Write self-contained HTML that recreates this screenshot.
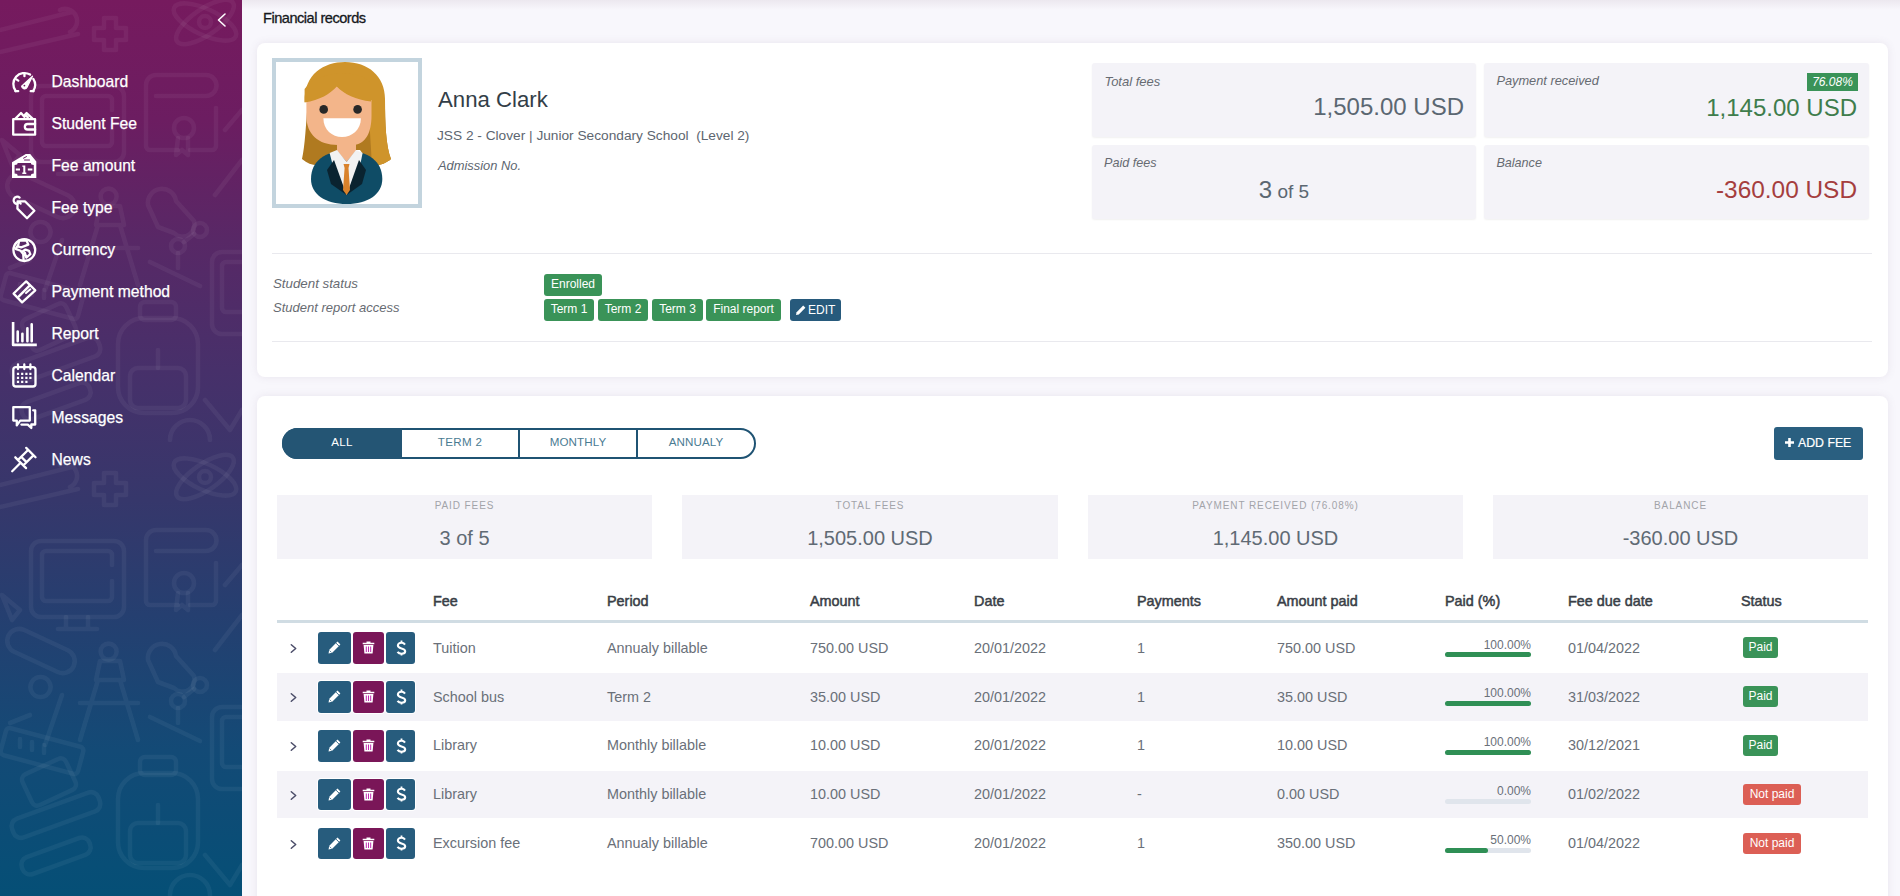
<!DOCTYPE html><html><head><meta charset="utf-8"><style>
html,body{margin:0;padding:0;width:1900px;height:896px;overflow:hidden;}
body{background:#f8f7fc;font-family:"Liberation Sans", sans-serif;position:relative;}
.t{position:absolute;white-space:nowrap;line-height:1;}
.r{position:absolute;box-sizing:border-box;}
.ic{position:absolute;}
</style></head><body>
<div class="r" style="left:0;top:0;width:242px;height:896px;background:linear-gradient(180deg,#761a5e 0px,#6c1d61 120px,#582866 240px,#47306a 370px,#36376b 500px,#253f70 615px,#134a76 750px,#054f76 896px);overflow:hidden;">
<svg width="242" height="896" style="position:absolute;left:0;top:0" fill="none" stroke="rgba(255,255,255,0.05)" stroke-width="4.6" stroke-linecap="round" stroke-linejoin="round">
<defs><g id="tile">
<path d="M104 18 h12 v10 h10 v12 h-10 v10 h-12 v-10 h-10 v-12 h10 z"/>
<ellipse cx="205" cy="22" rx="34" ry="13" transform="rotate(25 205 22)"/><ellipse cx="205" cy="22" rx="34" ry="13" transform="rotate(-35 205 22)"/><circle cx="205" cy="22" r="6"/>
<path d="M0 30 L72 12 M0 52 L78 34 M60 10 a10 10 0 0 1 10 22"/>
<rect x="31" y="86" width="93" height="76" rx="10"/><path d="M112 110 V100 a4 4 0 0 0 -4 -4 H46 a4 4 0 0 0 -4 4 V142 a4 4 0 0 0 4 4 H108 a4 4 0 0 0 4 -4 V126"/><path d="M66 162 v12 M88 162 v12 M58 174 H97"/>
<path d="M156 96 H206 a10 10 0 0 0 0 -21 H156 a10 10 0 0 0 -10 10 V146 a4 4 0 0 0 4 4 H178 M190 150 H212 a4 4 0 0 0 4 -4 V108"/><circle cx="184" cy="128" r="10"/><path d="M178 138 L176 155 L182 150 L188 155 L188 138"/>
<path d="M2 140 L20 155 L12 165 Z"/>
<path d="M225 130 L242 110 M215 195 L242 160"/>
<rect x="5" y="184" width="72" height="24" rx="12" transform="rotate(25 41 196)"/>
<circle cx="108.6" cy="196.6" r="8"/><path d="M100 206 L120 206 L124 225 L96 225 Z M98 225 L80 285 M120 225 L138 285 M80 248 H138"/>
<path d="M148 205 a14 14 0 0 1 28 -4 l18 20 a12 12 0 0 1 -20 12 l-16 -6 z"/>
<circle cx="200" cy="230" r="7"/><circle cx="178" cy="246" r="7"/><path d="M194 234 L184 242 M178 253 V268 M150 262 L200 286"/>
<rect x="212" y="252" width="50" height="82" rx="10"/><rect x="222" y="262" width="30" height="50" rx="4"/>
<path d="M40 242 a10 10 0 1 1 1 0 M30 260 L10 268 M62 240 L45 290"/>
<rect x="2" y="282" width="80" height="28" rx="4" transform="rotate(15 42 296)"/><path d="M20 284 v8 M32 287 v8 M44 290 v8"/>
<rect x="25" y="310" width="48" height="34" rx="6" transform="rotate(-25 49 327)"/>
<rect x="118" y="318" width="80" height="95" rx="26"/><rect x="140" y="302" width="36" height="18" rx="5"/><rect x="130" y="368" width="56" height="40" rx="8"/><path d="M158 350 v18"/>
<rect x="10" y="350" width="92" height="20" rx="8" transform="rotate(-20 56 360)"/>
<rect x="20" y="392" width="72" height="18" rx="8" transform="rotate(-20 56 401)"/>
<path d="M205 400 L230 430 L242 410"/>
<path d="M170 440 a20 20 0 0 1 40 0"/>
</g></defs>
<use href="#tile" y="-455"/><use href="#tile" y="0"/><use href="#tile" y="455"/>
</svg>
</div>
<svg class="ic" style="left:214px;top:11px" width="14" height="18" viewBox="0 0 14 18"><path d="M11 3 L4.5 9 L11 15" stroke="#fff" stroke-width="1.6" fill="none" stroke-linecap="round" stroke-linejoin="round"/></svg>
<div class="t" style="left:51.5px;top:73.91px;font-size:15.7px;color:#ffffff;-webkit-text-stroke:0.25px #fff;">Dashboard</div>
<div class="t" style="left:51.5px;top:115.91px;font-size:15.7px;color:#ffffff;-webkit-text-stroke:0.25px #fff;">Student Fee</div>
<div class="t" style="left:51.5px;top:157.91px;font-size:15.7px;color:#ffffff;-webkit-text-stroke:0.25px #fff;">Fee amount</div>
<div class="t" style="left:51.5px;top:199.91px;font-size:15.7px;color:#ffffff;-webkit-text-stroke:0.25px #fff;">Fee type</div>
<div class="t" style="left:51.5px;top:241.91px;font-size:15.7px;color:#ffffff;-webkit-text-stroke:0.25px #fff;">Currency</div>
<div class="t" style="left:51.5px;top:283.91px;font-size:15.7px;color:#ffffff;-webkit-text-stroke:0.25px #fff;">Payment method</div>
<div class="t" style="left:51.5px;top:325.91px;font-size:15.7px;color:#ffffff;-webkit-text-stroke:0.25px #fff;">Report</div>
<div class="t" style="left:51.5px;top:367.91px;font-size:15.7px;color:#ffffff;-webkit-text-stroke:0.25px #fff;">Calendar</div>
<div class="t" style="left:51.5px;top:409.91px;font-size:15.7px;color:#ffffff;-webkit-text-stroke:0.25px #fff;">Messages</div>
<div class="t" style="left:51.5px;top:451.91px;font-size:15.7px;color:#ffffff;-webkit-text-stroke:0.25px #fff;">News</div>
<svg class="ic" style="left:8px;top:66px" width="34" height="34" viewBox="0 0 34 34" fill="none" stroke="#fff" stroke-width="2.3" stroke-linecap="round" stroke-linejoin="round"><path d="M7.7 25 A11.1 11.1 0 0 1 22.1 8.6"/><path d="M25.3 12.9 A11.1 11.1 0 0 1 25.2 25"/><path d="M7.4 25.2 H10.2 M25.5 25.2 H22.7 M16.45 7.2 V10.2 M8.4 13.4 L10.3 14.6"/><path d="M13.6 20.3 L24.5 10.2 L19.1 21.3 A2.9 2.9 0 0 1 13.6 20.3 Z" fill="#fff" stroke-width="1.2"/><circle cx="16.4" cy="19.6" r="0.9" fill="#6e1c60" stroke="none"/></svg>
<svg class="ic" style="left:8px;top:108px" width="34" height="34" viewBox="0 0 34 34" fill="none" stroke="#fff" stroke-width="2.3" stroke-linecap="round" stroke-linejoin="round"><rect x="5.2" y="11.2" width="21.9" height="15.5"/><path d="M27.1 16 H19.6 a2.75 2.75 0 0 0 0 5.5 H27.1"/><path d="M7.5 10.5 L13 5 L16.5 9 M15.8 8 L18.6 5 L24.5 10.5 M18.2 7.8 l1.6 1.6"/></svg>
<svg class="ic" style="left:8px;top:150px" width="34" height="34" viewBox="0 0 34 34" fill="none" stroke="#fff" stroke-width="2.3" stroke-linecap="round" stroke-linejoin="round"><path fill="#fff" stroke="none" fill-rule="evenodd" d="M4 12.2 L17.8 4 H22.2 L28.3 11.6 V27.9 H4 Z M9.7 13 H22.8 L23.4 14.6 L25.8 15.1 V23.4 L23.4 23.9 L22.8 25.8 H9.7 L9.1 23.9 L6.6 23.4 V15.1 L9.1 14.6 Z"/><path stroke="#6a1e62" stroke-width="1" d="M15.5 8.2 l3 -1.6 M16.5 10 h5"/><path fill="#fff" stroke="none" d="M7.8 18.6 h4.2 v1.9 h-4.2 z M19.8 18.6 h4.6 v1.9 h-4.6 z M14.3 15.4 H17.3 V22.6 H18.3 V24 H14.3 V22.6 H15.3 V16.8 H14.3 Z"/></svg>
<svg class="ic" style="left:8px;top:191px" width="34" height="34" viewBox="0 0 34 34" fill="none" stroke="#fff" stroke-width="2.3" stroke-linecap="round" stroke-linejoin="round"><path d="M9.6 10.3 H16.9 L26.4 19.8 L19 27.2 L9.4 17.6 Z"/><path d="M11.6 6.6 A3.6 3.6 0 1 0 9.4 12.9 M12.6 12.6 a1.6 1.6 0 0 0 -2.4 -0.8"/></svg>
<svg class="ic" style="left:8px;top:233px" width="34" height="34" viewBox="0 0 34 34" fill="none" stroke="#fff" stroke-width="2.3" stroke-linecap="round" stroke-linejoin="round"><circle cx="16.3" cy="17.1" r="10.9"/><path d="M11.2 7.5 L10.2 12 L7.6 15.8 L12.6 17.7 L15.2 21 L15.6 27 M11.2 7.5 H18.5 L20.3 11.7 L13.2 14.3 L10.5 13.6 M14.8 18.2 L17.4 16.6 L21.0 17.8 L22.3 21.2 L18.3 24.6 L16.8 19.6"/></svg>
<svg class="ic" style="left:8px;top:275px" width="34" height="34" viewBox="0 0 34 34" fill="none" stroke="#fff" stroke-width="2.3" stroke-linecap="round" stroke-linejoin="round"><path d="M5.6 18.6 L18.2 6.4 L27.3 15.3 L14.1 27.4 Z"/><path d="M10.6 21.6 L21.6 10.6" stroke-width="2.4"/><path d="M18.0 18.0 L22.3 14.3" stroke-width="2"/><path d="M8.0 18.6 L17.6 8.9" stroke-width="0.9" stroke="#552763" /></svg>
<svg class="ic" style="left:8px;top:316px" width="34" height="34" viewBox="0 0 34 34" fill="none" stroke="#fff" stroke-width="2.3" stroke-linecap="round" stroke-linejoin="round"><path d="M5.1 5.9 V28.9 H28.8" stroke-width="2.6" stroke-linecap="butt"/><path d="M9.7 15.6 V25.3 M14.4 17.7 V25.3 M19.4 12.2 V25.3 M23.7 8.4 V25.3" stroke-width="2.6"/></svg>
<svg class="ic" style="left:8px;top:358px" width="34" height="34" viewBox="0 0 34 34" fill="none" stroke="#fff" stroke-width="2.3" stroke-linecap="round" stroke-linejoin="round"><rect x="5.3" y="9.1" width="22.2" height="19.4" rx="2.6"/><path d="M10 6.4 V11 M16.3 6.4 V11 M22.4 6.4 V11"/><path fill="#fff" stroke="none" d="M8.9 14.8h2.2v2.2h-2.2zM13.1 14.8h2.2v2.2h-2.2zM17.3 14.8h2.2v2.2h-2.2zM21.3 14.8h2.2v2.2h-2.2zM8.9 18.8h2.2v2.2h-2.2zM13.1 18.8h2.2v2.2h-2.2zM17.3 18.8h2.2v2.2h-2.2zM21.3 18.8h2.2v2.2h-2.2zM8.9 22.8h2.2v2.2h-2.2zM13.1 22.8h2.2v2.2h-2.2zM17.3 22.8h2.2v2.2h-2.2z"/></svg>
<svg class="ic" style="left:8px;top:400px" width="34" height="34" viewBox="0 0 34 34" fill="none" stroke="#fff" stroke-width="2.3" stroke-linecap="round" stroke-linejoin="round"><path d="M5.3 7.2 H21.8 V20.6 H12.2 L8.8 25.4 V20.6 H5.3 Z"/><path d="M25.2 10.3 H27.2 V24.5 H23.3 V28.0 L19.8 24.6 H13.4"/></svg>
<svg class="ic" style="left:8px;top:442px" width="34" height="34" viewBox="0 0 34 34" fill="none" stroke="#fff" stroke-width="2.3" stroke-linecap="round" stroke-linejoin="round"><g transform="translate(4.2 29.2) rotate(45)"><path d="M0 0 V-10.5 M-7.6 -12 H7.6 M-3.8 -12.5 L-3.8 -25.5 M3.8 -12.5 L3.8 -25.5 M-6.6 -26.4 H6.6 M-3.4 -16.5 H3.4" /></g></svg>
<div class="r" style="left:242px;top:0px;width:1658px;height:10px;background:linear-gradient(180deg,#ece8ef,#f8f7fc);"></div>
<div class="t" style="left:263.0px;top:11.44px;font-size:14.6px;color:#16191d;letter-spacing:-0.5px;-webkit-text-stroke:0.3px #16191d;">Financial records</div>
<div class="r" style="left:257px;top:43px;width:1631px;height:334px;background:#fff;border-radius:8px;box-shadow:0 0 9px rgba(125,95,135,0.12);"></div>
<div class="r" style="left:272px;top:58px;width:150px;height:150px;border:4px solid #c3d4de;background:#fff;"></div>
<svg class="ic" style="left:268px;top:54px" width="160" height="160" viewBox="0 0 160 160">
<path d="M40 45 C38 70 37 92 34 105 C40 110 46 112 52 111 L70 96 L92 96 L104 112 C112 112 120 108 123 105 C118 92 117 70 117 45 Z" fill="#b07a20"/>
<path d="M100 45 L104 112 C112 112 120 108 123 105 C118 92 117 70 117 45 Z" fill="#cf942b"/>
<path d="M36.6 48 C36 20 56 8 77 8 C100 8 117 22 117 45 L117 60 L103 60 L103 48 Z" fill="#cf942b"/>
<path d="M38.4 46 L38.4 62 C38.4 80 50 91 70 91 L84 91 C98 91 103.5 78 103.5 62 L103.5 46 C88 44 76 40 68.75 32 C60 40 50 44 38.4 46 Z" fill="#f3b58a"/>
<path d="M36.6 48.5 C52 46 62 40 68.75 32.5 C76 40 88 46 103 47.5 L103 30 C95 15 50 15 36.6 35 Z" fill="#cf942b"/>
<circle cx="55.7" cy="55.4" r="4.3" fill="#282828"/><circle cx="89.6" cy="55.4" r="4.3" fill="#282828"/>
<path d="M55.4 64.3 L92.9 64.3 C92.9 76 84 83 74 83 C64 83 55.4 76 55.4 64.3 Z" fill="#fff"/>
<path d="M69 88 L88 88 L88 100 L69 100 Z" fill="#f3b58a"/>
<path d="M43 125 C43 107 57 97 78.6 97 C100 97 114.3 107 114.3 125 C114.3 140 100 150 78.6 150 C57 150 43 140 43 125 Z" fill="#0f4c66"/>
<path d="M69 88 L88 88 L88 97 L78.6 108 L69 97 Z" fill="#f3b58a"/><path d="M61.6 99 L69 96 L78.6 108 L88 96 L94.6 99 L92 112 L78.6 141 L65 112 Z" fill="#f2f2f2"/>
<path d="M59 116 L66 106 L78.6 141 L63 130 Z" fill="#0a2330"/><path d="M98 116 L91 106 L78.6 141 L94 130 Z" fill="#0a2330"/>
<path d="M75.5 110 L81.5 110 L80.5 114 L82 136 L78.6 141 L75 136 L76.6 114 Z" fill="#d9822b"/>
</svg>
<div class="t" style="left:438.0px;top:89.21px;font-size:22.2px;color:#333e48;">Anna Clark</div>
<div class="t" style="left:437.0px;top:129.20px;font-size:13.7px;color:#5d6670;">JSS 2 - Clover | Junior Secondary School&nbsp; (Level 2)</div>
<div class="t" style="left:438.0px;top:159.88px;font-size:12.9px;color:#5d6670;font-style:italic;">Admission No.</div>
<div class="r" style="left:1092px;top:63px;width:384px;height:74px;background:#f4f3f8;border-radius:3px;box-shadow:0 1px 2px rgba(0,0,0,0.06);"></div>
<div class="r" style="left:1484px;top:63px;width:385px;height:74px;background:#f4f3f8;border-radius:3px;box-shadow:0 1px 2px rgba(0,0,0,0.06);"></div>
<div class="r" style="left:1092px;top:145px;width:384px;height:74px;background:#f4f3f8;border-radius:3px;box-shadow:0 1px 2px rgba(0,0,0,0.06);"></div>
<div class="r" style="left:1484px;top:145px;width:385px;height:74px;background:#f4f3f8;border-radius:3px;box-shadow:0 1px 2px rgba(0,0,0,0.06);"></div>
<div class="t" style="left:1104.4px;top:75.00px;font-size:13px;color:#676b72;font-style:italic;">Total fees</div>
<div class="t" style="left:864.0px;width:600px;text-align:right;top:95.48px;font-size:24px;color:#5b6772;">1,505.00 USD</div>
<div class="t" style="left:1496.4px;top:75.16px;font-size:12.8px;color:#676b72;font-style:italic;">Payment received</div>
<div class="r" style="left:1807px;top:73px;width:51px;height:18px;background:#3a9358;"></div>
<div class="t" style="left:1532.5px;width:600px;text-align:center;top:76.34px;font-size:12px;color:#fff;font-style:italic;">76.08%</div>
<div class="t" style="left:1257.0px;width:600px;text-align:right;top:95.88px;font-size:24px;color:#3f7d4c;">1,145.00 USD</div>
<div class="t" style="left:1104.0px;top:157.03px;font-size:12.6px;color:#676b72;font-style:italic;">Paid fees</div>
<div class="t" style="left:984px;width:600px;text-align:center;top:178.18px;font-size:24px;color:#5b6772;">3<span style="font-size:19px"> of 5</span></div>
<div class="t" style="left:1496.4px;top:157.03px;font-size:12.6px;color:#676b72;font-style:italic;">Balance</div>
<div class="t" style="left:1257.0px;width:600px;text-align:right;top:177.65px;font-size:24.4px;color:#a53e3e;">-360.00 USD</div>
<div class="r" style="left:272px;top:253px;width:1600px;height:1px;background:#e9e9ee;"></div>
<div class="t" style="left:273.0px;top:276.64px;font-size:13.3px;color:#676b72;font-style:italic;">Student status</div>
<div class="t" style="left:273.0px;top:301.40px;font-size:13px;color:#676b72;font-style:italic;">Student report access</div>
<div class="r" style="left:544px;top:274px;width:58px;height:22px;background:#3a9358;border-radius:3px;"></div>
<div class="t" style="left:273.0px;width:600px;text-align:center;top:278.04px;font-size:12px;color:#fff;">Enrolled</div>
<div class="r" style="left:544px;top:299px;width:50px;height:22px;background:#3a9358;border-radius:3px;"></div>
<div class="t" style="left:269.0px;width:600px;text-align:center;top:303.04px;font-size:12px;color:#fff;">Term 1</div>
<div class="r" style="left:598px;top:299px;width:50px;height:22px;background:#3a9358;border-radius:3px;"></div>
<div class="t" style="left:323.0px;width:600px;text-align:center;top:303.04px;font-size:12px;color:#fff;">Term 2</div>
<div class="r" style="left:652px;top:299px;width:51px;height:22px;background:#3a9358;border-radius:3px;"></div>
<div class="t" style="left:377.5px;width:600px;text-align:center;top:303.04px;font-size:12px;color:#fff;">Term 3</div>
<div class="r" style="left:706px;top:299px;width:75px;height:22px;background:#3a9358;border-radius:3px;"></div>
<div class="t" style="left:443.5px;width:600px;text-align:center;top:303.04px;font-size:12px;color:#fff;">Final report</div>
<div class="r" style="left:790px;top:299px;width:51px;height:22px;background:#275a7c;border-radius:3px;"></div>
<svg class="ic" style="left:795px;top:304px" width="12" height="12" viewBox="0 0 12 12"><path d="M1 11 L1.6 8.2 L8.2 1.6 L10.4 3.8 L3.8 10.4 Z" fill="#fff"/></svg>
<div class="t" style="left:808.0px;top:304.04px;font-size:12px;color:#fff;">EDIT</div>
<div class="r" style="left:272px;top:341px;width:1600px;height:1px;background:#e9e9ee;"></div>
<div class="r" style="left:257px;top:396px;width:1631px;height:534px;background:#fff;border-radius:8px;box-shadow:0 0 9px rgba(125,95,135,0.12);"></div>
<div class="r" style="left:282px;top:428px;width:474px;height:31px;border:2px solid #1f5373;border-radius:16px;overflow:hidden;"></div>
<div class="r" style="left:282px;top:428px;width:120px;height:31px;background:#245574;border-radius:16px 0 0 16px;"></div>
<div class="r" style="left:518px;top:428px;width:2px;height:31px;background:#1f5373;"></div>
<div class="r" style="left:636px;top:428px;width:2px;height:31px;background:#1f5373;"></div>
<div class="t" style="left:42.0px;width:600px;text-align:center;top:436.18px;font-size:11.6px;color:#fff;letter-spacing:0.3px;">ALL</div>
<div class="t" style="left:160.0px;width:600px;text-align:center;top:436.18px;font-size:11.6px;color:#4a7b92;letter-spacing:0.3px;">TERM 2</div>
<div class="t" style="left:278.0px;width:600px;text-align:center;top:436.18px;font-size:11.6px;color:#4a7b92;letter-spacing:0.1px;">MONTHLY</div>
<div class="t" style="left:396.0px;width:600px;text-align:center;top:436.18px;font-size:11.6px;color:#4a7b92;letter-spacing:0.1px;">ANNUALY</div>
<div class="r" style="left:1774px;top:427px;width:89px;height:33px;background:#2a5f80;border-radius:3px;"></div>
<svg class="ic" style="left:1784px;top:437px" width="11" height="11" viewBox="0 0 11 11"><path d="M5.5 1 V10 M1 5.5 H10" stroke="#fff" stroke-width="2.6"/></svg>
<div class="t" style="left:1798.0px;top:436.59px;font-size:12.3px;color:#fff;-webkit-text-stroke:0.2px #fff;">ADD FEE</div>
<div class="r" style="left:277px;top:495px;width:375px;height:64px;background:#f4f3f8;"></div>
<div class="t" style="left:164.5px;width:600px;text-align:center;top:500.54px;font-size:10px;color:#a2a3a9;letter-spacing:0.9px;">PAID FEES</div>
<div class="t" style="left:164.5px;width:600px;text-align:center;top:527.87px;font-size:20px;color:#606a74;">3 of 5</div>
<div class="r" style="left:682px;top:495px;width:376px;height:64px;background:#f4f3f8;"></div>
<div class="t" style="left:570.0px;width:600px;text-align:center;top:500.54px;font-size:10px;color:#a2a3a9;letter-spacing:0.9px;">TOTAL FEES</div>
<div class="t" style="left:570.0px;width:600px;text-align:center;top:527.87px;font-size:20px;color:#606a74;">1,505.00 USD</div>
<div class="r" style="left:1088px;top:495px;width:375px;height:64px;background:#f4f3f8;"></div>
<div class="t" style="left:975.5px;width:600px;text-align:center;top:500.54px;font-size:10px;color:#a2a3a9;letter-spacing:0.9px;">PAYMENT RECEIVED (76.08%)</div>
<div class="t" style="left:975.5px;width:600px;text-align:center;top:527.87px;font-size:20px;color:#606a74;">1,145.00 USD</div>
<div class="r" style="left:1493px;top:495px;width:375px;height:64px;background:#f4f3f8;"></div>
<div class="t" style="left:1380.5px;width:600px;text-align:center;top:500.54px;font-size:10px;color:#a2a3a9;letter-spacing:0.9px;">BALANCE</div>
<div class="t" style="left:1380.5px;width:600px;text-align:center;top:527.87px;font-size:20px;color:#606a74;">-360.00 USD</div>
<div class="t" style="left:433.0px;top:594.11px;font-size:14.4px;color:#393e46;-webkit-text-stroke:0.5px #393e46;">Fee</div>
<div class="t" style="left:607.0px;top:594.11px;font-size:14.4px;color:#393e46;-webkit-text-stroke:0.5px #393e46;">Period</div>
<div class="t" style="left:810.0px;top:594.11px;font-size:14.4px;color:#393e46;-webkit-text-stroke:0.5px #393e46;">Amount</div>
<div class="t" style="left:974.0px;top:594.11px;font-size:14.4px;color:#393e46;-webkit-text-stroke:0.5px #393e46;">Date</div>
<div class="t" style="left:1137.0px;top:594.11px;font-size:14.4px;color:#393e46;-webkit-text-stroke:0.5px #393e46;">Payments</div>
<div class="t" style="left:1277.0px;top:594.11px;font-size:14.4px;color:#393e46;-webkit-text-stroke:0.5px #393e46;">Amount paid</div>
<div class="t" style="left:1445.0px;top:594.11px;font-size:14.4px;color:#393e46;-webkit-text-stroke:0.5px #393e46;">Paid (%)</div>
<div class="t" style="left:1568.0px;top:594.11px;font-size:14.4px;color:#393e46;-webkit-text-stroke:0.5px #393e46;">Fee due date</div>
<div class="t" style="left:1741.0px;top:594.11px;font-size:14.4px;color:#393e46;-webkit-text-stroke:0.5px #393e46;">Status</div>
<div class="r" style="left:277px;top:620px;width:1591px;height:3px;background:#d0dce3;"></div>
<svg class="ic" style="left:288px;top:642.4px" width="12" height="14" viewBox="0 0 12 14"><path d="M3.3 2.7 L7.7 6.5 L3.3 10.3" stroke="#4a4c68" stroke-width="1.5" fill="none" stroke-linecap="round" stroke-linejoin="round"/></svg>
<div class="r" style="left:318px;top:632px;width:33px;height:32px;background:#275c7d;border-radius:3px;box-shadow:0 0 0 1px #fff;"></div>
<div class="r" style="left:353px;top:632px;width:31px;height:32px;background:#7a1658;border-radius:3px;box-shadow:0 0 0 1px #fff;"></div>
<div class="r" style="left:386px;top:632px;width:29px;height:32px;background:#275c7d;border-radius:3px;box-shadow:0 0 0 1px #fff;"></div>
<svg class="ic" style="left:327px;top:640.4px" width="15" height="15" viewBox="0 0 15 15"><path d="M1.5 13.5 L2.3 9.8 L10.5 1.6 L13.4 4.5 L5.2 12.7 Z" fill="#fff"/><path d="M9.0 3.1 L11.9 6.0" stroke="#275c7d" stroke-width="0.9"/><path d="M2.6 10.6 L4.4 12.4" stroke="#275c7d" stroke-width="0.7"/></svg>
<svg class="ic" style="left:362px;top:640.4px" width="13" height="14" viewBox="0 0 13 14"><path d="M4.5 1.5 h4 v1.2 h3.8 v1.6 H0.7 V2.7 H4.5 Z" fill="#fff"/><path d="M1.6 5 H11.4 L10.6 13.6 H2.4 Z" fill="#fff"/><path d="M4.3 6.5 V12 M6.5 6.5 V12 M8.7 6.5 V12" stroke="#c02bb0" stroke-width="1"/></svg>
<svg class="ic" style="left:395.5px;top:639.9px" width="11" height="16" viewBox="0 0 11 16"><path d="M5.5 0.5 V3 M5.5 13 V15.5" stroke="#fff" stroke-width="1.8"/><path d="M9 4.6 C8.2 3.4 7 2.8 5.4 2.8 C3.3 2.8 1.9 3.8 1.9 5.5 C1.9 7.4 3.7 7.9 5.5 8.4 C7.4 8.9 9.2 9.4 9.2 11.3 C9.2 12.9 7.7 13.8 5.5 13.8 C3.7 13.8 2.4 13.1 1.5 11.9" stroke="#fff" stroke-width="2.1" fill="none"/></svg>
<div class="t" style="left:433.0px;top:640.71px;font-size:14.4px;color:#6a7079;">Tuition</div>
<div class="t" style="left:607.0px;top:640.71px;font-size:14.4px;color:#6a7079;">Annualy billable</div>
<div class="t" style="left:810.0px;top:640.71px;font-size:14.4px;color:#6a7079;">750.00 USD</div>
<div class="t" style="left:974.0px;top:640.71px;font-size:14.4px;color:#6a7079;">20/01/2022</div>
<div class="t" style="left:1137.0px;top:640.71px;font-size:14.4px;color:#6a7079;">1</div>
<div class="t" style="left:1277.0px;top:640.71px;font-size:14.4px;color:#6a7079;">750.00 USD</div>
<div class="r" style="left:1445px;top:652.4px;width:86px;height:5.0px;background:#e0e5ec;border-radius:3px;"></div>
<div class="r" style="left:1445px;top:652.4px;width:86.0px;height:5.0px;background:#2f8f55;border-radius:3px;"></div>
<div class="t" style="left:931.0px;width:600px;text-align:right;top:638.64px;font-size:12px;color:#6a7079;">100.00%</div>
<div class="t" style="left:1568.0px;top:640.71px;font-size:14.4px;color:#6a7079;">01/04/2022</div>
<div class="r" style="left:1743px;top:637.4px;width:35px;height:21.0px;background:#3a9358;border-radius:3px;"></div>
<div class="t" style="left:1460.5px;width:600px;text-align:center;top:641.24px;font-size:12px;color:#fff;">Paid</div>
<div class="r" style="left:277px;top:673px;width:1591px;height:48px;background:#f4f3f8;"></div>
<svg class="ic" style="left:288px;top:691.25px" width="12" height="14" viewBox="0 0 12 14"><path d="M3.3 2.7 L7.7 6.5 L3.3 10.3" stroke="#4a4c68" stroke-width="1.5" fill="none" stroke-linecap="round" stroke-linejoin="round"/></svg>
<div class="r" style="left:318px;top:681px;width:33px;height:32px;background:#275c7d;border-radius:3px;box-shadow:0 0 0 1px #fff;"></div>
<div class="r" style="left:353px;top:681px;width:31px;height:32px;background:#7a1658;border-radius:3px;box-shadow:0 0 0 1px #fff;"></div>
<div class="r" style="left:386px;top:681px;width:29px;height:32px;background:#275c7d;border-radius:3px;box-shadow:0 0 0 1px #fff;"></div>
<svg class="ic" style="left:327px;top:689.25px" width="15" height="15" viewBox="0 0 15 15"><path d="M1.5 13.5 L2.3 9.8 L10.5 1.6 L13.4 4.5 L5.2 12.7 Z" fill="#fff"/><path d="M9.0 3.1 L11.9 6.0" stroke="#275c7d" stroke-width="0.9"/><path d="M2.6 10.6 L4.4 12.4" stroke="#275c7d" stroke-width="0.7"/></svg>
<svg class="ic" style="left:362px;top:689.25px" width="13" height="14" viewBox="0 0 13 14"><path d="M4.5 1.5 h4 v1.2 h3.8 v1.6 H0.7 V2.7 H4.5 Z" fill="#fff"/><path d="M1.6 5 H11.4 L10.6 13.6 H2.4 Z" fill="#fff"/><path d="M4.3 6.5 V12 M6.5 6.5 V12 M8.7 6.5 V12" stroke="#c02bb0" stroke-width="1"/></svg>
<svg class="ic" style="left:395.5px;top:688.75px" width="11" height="16" viewBox="0 0 11 16"><path d="M5.5 0.5 V3 M5.5 13 V15.5" stroke="#fff" stroke-width="1.8"/><path d="M9 4.6 C8.2 3.4 7 2.8 5.4 2.8 C3.3 2.8 1.9 3.8 1.9 5.5 C1.9 7.4 3.7 7.9 5.5 8.4 C7.4 8.9 9.2 9.4 9.2 11.3 C9.2 12.9 7.7 13.8 5.5 13.8 C3.7 13.8 2.4 13.1 1.5 11.9" stroke="#fff" stroke-width="2.1" fill="none"/></svg>
<div class="t" style="left:433.0px;top:689.56px;font-size:14.4px;color:#6a7079;">School bus</div>
<div class="t" style="left:607.0px;top:689.56px;font-size:14.4px;color:#6a7079;">Term 2</div>
<div class="t" style="left:810.0px;top:689.56px;font-size:14.4px;color:#6a7079;">35.00 USD</div>
<div class="t" style="left:974.0px;top:689.56px;font-size:14.4px;color:#6a7079;">20/01/2022</div>
<div class="t" style="left:1137.0px;top:689.56px;font-size:14.4px;color:#6a7079;">1</div>
<div class="t" style="left:1277.0px;top:689.56px;font-size:14.4px;color:#6a7079;">35.00 USD</div>
<div class="r" style="left:1445px;top:701.25px;width:86px;height:5.0px;background:#e0e5ec;border-radius:3px;"></div>
<div class="r" style="left:1445px;top:701.25px;width:86.0px;height:5.0px;background:#2f8f55;border-radius:3px;"></div>
<div class="t" style="left:931.0px;width:600px;text-align:right;top:687.49px;font-size:12px;color:#6a7079;">100.00%</div>
<div class="t" style="left:1568.0px;top:689.56px;font-size:14.4px;color:#6a7079;">31/03/2022</div>
<div class="r" style="left:1743px;top:686.25px;width:35px;height:21.0px;background:#3a9358;border-radius:3px;"></div>
<div class="t" style="left:1460.5px;width:600px;text-align:center;top:690.09px;font-size:12px;color:#fff;">Paid</div>
<svg class="ic" style="left:288px;top:740.1px" width="12" height="14" viewBox="0 0 12 14"><path d="M3.3 2.7 L7.7 6.5 L3.3 10.3" stroke="#4a4c68" stroke-width="1.5" fill="none" stroke-linecap="round" stroke-linejoin="round"/></svg>
<div class="r" style="left:318px;top:730px;width:33px;height:32px;background:#275c7d;border-radius:3px;box-shadow:0 0 0 1px #fff;"></div>
<div class="r" style="left:353px;top:730px;width:31px;height:32px;background:#7a1658;border-radius:3px;box-shadow:0 0 0 1px #fff;"></div>
<div class="r" style="left:386px;top:730px;width:29px;height:32px;background:#275c7d;border-radius:3px;box-shadow:0 0 0 1px #fff;"></div>
<svg class="ic" style="left:327px;top:738.1px" width="15" height="15" viewBox="0 0 15 15"><path d="M1.5 13.5 L2.3 9.8 L10.5 1.6 L13.4 4.5 L5.2 12.7 Z" fill="#fff"/><path d="M9.0 3.1 L11.9 6.0" stroke="#275c7d" stroke-width="0.9"/><path d="M2.6 10.6 L4.4 12.4" stroke="#275c7d" stroke-width="0.7"/></svg>
<svg class="ic" style="left:362px;top:738.1px" width="13" height="14" viewBox="0 0 13 14"><path d="M4.5 1.5 h4 v1.2 h3.8 v1.6 H0.7 V2.7 H4.5 Z" fill="#fff"/><path d="M1.6 5 H11.4 L10.6 13.6 H2.4 Z" fill="#fff"/><path d="M4.3 6.5 V12 M6.5 6.5 V12 M8.7 6.5 V12" stroke="#c02bb0" stroke-width="1"/></svg>
<svg class="ic" style="left:395.5px;top:737.6px" width="11" height="16" viewBox="0 0 11 16"><path d="M5.5 0.5 V3 M5.5 13 V15.5" stroke="#fff" stroke-width="1.8"/><path d="M9 4.6 C8.2 3.4 7 2.8 5.4 2.8 C3.3 2.8 1.9 3.8 1.9 5.5 C1.9 7.4 3.7 7.9 5.5 8.4 C7.4 8.9 9.2 9.4 9.2 11.3 C9.2 12.9 7.7 13.8 5.5 13.8 C3.7 13.8 2.4 13.1 1.5 11.9" stroke="#fff" stroke-width="2.1" fill="none"/></svg>
<div class="t" style="left:433.0px;top:738.41px;font-size:14.4px;color:#6a7079;">Library</div>
<div class="t" style="left:607.0px;top:738.41px;font-size:14.4px;color:#6a7079;">Monthly billable</div>
<div class="t" style="left:810.0px;top:738.41px;font-size:14.4px;color:#6a7079;">10.00 USD</div>
<div class="t" style="left:974.0px;top:738.41px;font-size:14.4px;color:#6a7079;">20/01/2022</div>
<div class="t" style="left:1137.0px;top:738.41px;font-size:14.4px;color:#6a7079;">1</div>
<div class="t" style="left:1277.0px;top:738.41px;font-size:14.4px;color:#6a7079;">10.00 USD</div>
<div class="r" style="left:1445px;top:750.1px;width:86px;height:5.0px;background:#e0e5ec;border-radius:3px;"></div>
<div class="r" style="left:1445px;top:750.1px;width:86.0px;height:5.0px;background:#2f8f55;border-radius:3px;"></div>
<div class="t" style="left:931.0px;width:600px;text-align:right;top:736.34px;font-size:12px;color:#6a7079;">100.00%</div>
<div class="t" style="left:1568.0px;top:738.41px;font-size:14.4px;color:#6a7079;">30/12/2021</div>
<div class="r" style="left:1743px;top:735.1px;width:35px;height:21.0px;background:#3a9358;border-radius:3px;"></div>
<div class="t" style="left:1460.5px;width:600px;text-align:center;top:738.94px;font-size:12px;color:#fff;">Paid</div>
<div class="r" style="left:277px;top:771px;width:1591px;height:47px;background:#f4f3f8;"></div>
<svg class="ic" style="left:288px;top:788.95px" width="12" height="14" viewBox="0 0 12 14"><path d="M3.3 2.7 L7.7 6.5 L3.3 10.3" stroke="#4a4c68" stroke-width="1.5" fill="none" stroke-linecap="round" stroke-linejoin="round"/></svg>
<div class="r" style="left:318px;top:779px;width:33px;height:31px;background:#275c7d;border-radius:3px;box-shadow:0 0 0 1px #fff;"></div>
<div class="r" style="left:353px;top:779px;width:31px;height:31px;background:#7a1658;border-radius:3px;box-shadow:0 0 0 1px #fff;"></div>
<div class="r" style="left:386px;top:779px;width:29px;height:31px;background:#275c7d;border-radius:3px;box-shadow:0 0 0 1px #fff;"></div>
<svg class="ic" style="left:327px;top:786.95px" width="15" height="15" viewBox="0 0 15 15"><path d="M1.5 13.5 L2.3 9.8 L10.5 1.6 L13.4 4.5 L5.2 12.7 Z" fill="#fff"/><path d="M9.0 3.1 L11.9 6.0" stroke="#275c7d" stroke-width="0.9"/><path d="M2.6 10.6 L4.4 12.4" stroke="#275c7d" stroke-width="0.7"/></svg>
<svg class="ic" style="left:362px;top:786.95px" width="13" height="14" viewBox="0 0 13 14"><path d="M4.5 1.5 h4 v1.2 h3.8 v1.6 H0.7 V2.7 H4.5 Z" fill="#fff"/><path d="M1.6 5 H11.4 L10.6 13.6 H2.4 Z" fill="#fff"/><path d="M4.3 6.5 V12 M6.5 6.5 V12 M8.7 6.5 V12" stroke="#c02bb0" stroke-width="1"/></svg>
<svg class="ic" style="left:395.5px;top:786.45px" width="11" height="16" viewBox="0 0 11 16"><path d="M5.5 0.5 V3 M5.5 13 V15.5" stroke="#fff" stroke-width="1.8"/><path d="M9 4.6 C8.2 3.4 7 2.8 5.4 2.8 C3.3 2.8 1.9 3.8 1.9 5.5 C1.9 7.4 3.7 7.9 5.5 8.4 C7.4 8.9 9.2 9.4 9.2 11.3 C9.2 12.9 7.7 13.8 5.5 13.8 C3.7 13.8 2.4 13.1 1.5 11.9" stroke="#fff" stroke-width="2.1" fill="none"/></svg>
<div class="t" style="left:433.0px;top:787.26px;font-size:14.4px;color:#6a7079;">Library</div>
<div class="t" style="left:607.0px;top:787.26px;font-size:14.4px;color:#6a7079;">Monthly billable</div>
<div class="t" style="left:810.0px;top:787.26px;font-size:14.4px;color:#6a7079;">10.00 USD</div>
<div class="t" style="left:974.0px;top:787.26px;font-size:14.4px;color:#6a7079;">20/01/2022</div>
<div class="t" style="left:1137.0px;top:787.26px;font-size:14.4px;color:#6a7079;">-</div>
<div class="t" style="left:1277.0px;top:787.26px;font-size:14.4px;color:#6a7079;">0.00 USD</div>
<div class="r" style="left:1445px;top:798.95px;width:86px;height:5.0px;background:#e0e5ec;border-radius:3px;"></div>
<div class="t" style="left:931.0px;width:600px;text-align:right;top:785.19px;font-size:12px;color:#6a7079;">0.00%</div>
<div class="t" style="left:1568.0px;top:787.26px;font-size:14.4px;color:#6a7079;">01/02/2022</div>
<div class="r" style="left:1743px;top:783.95px;width:58px;height:21.0px;background:#dc5f55;border-radius:3px;"></div>
<div class="t" style="left:1472.0px;width:600px;text-align:center;top:787.79px;font-size:12px;color:#fff;">Not paid</div>
<svg class="ic" style="left:288px;top:837.8px" width="12" height="14" viewBox="0 0 12 14"><path d="M3.3 2.7 L7.7 6.5 L3.3 10.3" stroke="#4a4c68" stroke-width="1.5" fill="none" stroke-linecap="round" stroke-linejoin="round"/></svg>
<div class="r" style="left:318px;top:828px;width:33px;height:31px;background:#275c7d;border-radius:3px;box-shadow:0 0 0 1px #fff;"></div>
<div class="r" style="left:353px;top:828px;width:31px;height:31px;background:#7a1658;border-radius:3px;box-shadow:0 0 0 1px #fff;"></div>
<div class="r" style="left:386px;top:828px;width:29px;height:31px;background:#275c7d;border-radius:3px;box-shadow:0 0 0 1px #fff;"></div>
<svg class="ic" style="left:327px;top:835.8px" width="15" height="15" viewBox="0 0 15 15"><path d="M1.5 13.5 L2.3 9.8 L10.5 1.6 L13.4 4.5 L5.2 12.7 Z" fill="#fff"/><path d="M9.0 3.1 L11.9 6.0" stroke="#275c7d" stroke-width="0.9"/><path d="M2.6 10.6 L4.4 12.4" stroke="#275c7d" stroke-width="0.7"/></svg>
<svg class="ic" style="left:362px;top:835.8px" width="13" height="14" viewBox="0 0 13 14"><path d="M4.5 1.5 h4 v1.2 h3.8 v1.6 H0.7 V2.7 H4.5 Z" fill="#fff"/><path d="M1.6 5 H11.4 L10.6 13.6 H2.4 Z" fill="#fff"/><path d="M4.3 6.5 V12 M6.5 6.5 V12 M8.7 6.5 V12" stroke="#c02bb0" stroke-width="1"/></svg>
<svg class="ic" style="left:395.5px;top:835.3px" width="11" height="16" viewBox="0 0 11 16"><path d="M5.5 0.5 V3 M5.5 13 V15.5" stroke="#fff" stroke-width="1.8"/><path d="M9 4.6 C8.2 3.4 7 2.8 5.4 2.8 C3.3 2.8 1.9 3.8 1.9 5.5 C1.9 7.4 3.7 7.9 5.5 8.4 C7.4 8.9 9.2 9.4 9.2 11.3 C9.2 12.9 7.7 13.8 5.5 13.8 C3.7 13.8 2.4 13.1 1.5 11.9" stroke="#fff" stroke-width="2.1" fill="none"/></svg>
<div class="t" style="left:433.0px;top:836.11px;font-size:14.4px;color:#6a7079;">Excursion fee</div>
<div class="t" style="left:607.0px;top:836.11px;font-size:14.4px;color:#6a7079;">Annualy billable</div>
<div class="t" style="left:810.0px;top:836.11px;font-size:14.4px;color:#6a7079;">700.00 USD</div>
<div class="t" style="left:974.0px;top:836.11px;font-size:14.4px;color:#6a7079;">20/01/2022</div>
<div class="t" style="left:1137.0px;top:836.11px;font-size:14.4px;color:#6a7079;">1</div>
<div class="t" style="left:1277.0px;top:836.11px;font-size:14.4px;color:#6a7079;">350.00 USD</div>
<div class="r" style="left:1445px;top:847.8px;width:86px;height:5.0px;background:#e0e5ec;border-radius:3px;"></div>
<div class="r" style="left:1445px;top:847.8px;width:43.0px;height:5.0px;background:#2f8f55;border-radius:3px;"></div>
<div class="t" style="left:931.0px;width:600px;text-align:right;top:834.04px;font-size:12px;color:#6a7079;">50.00%</div>
<div class="t" style="left:1568.0px;top:836.11px;font-size:14.4px;color:#6a7079;">01/04/2022</div>
<div class="r" style="left:1743px;top:832.8px;width:58px;height:21.0px;background:#dc5f55;border-radius:3px;"></div>
<div class="t" style="left:1472.0px;width:600px;text-align:center;top:836.64px;font-size:12px;color:#fff;">Not paid</div>
</body></html>
